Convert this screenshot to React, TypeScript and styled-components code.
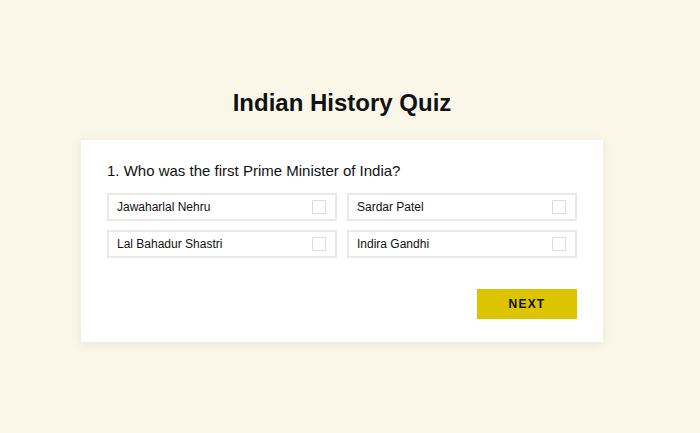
import styled, { createGlobalStyle } from "styled-components";

const GlobalStyle = createGlobalStyle`
  body {
    margin: 0;
    background: #faf7e9;
    font-family: Arial, "Liberation Sans", sans-serif;
  }
`;

const Page = styled.div`
  display: flex;
  flex-direction: column;
  align-items: center;
  padding: 88px 16px 0 0;
  height: 433px;
  box-sizing: border-box;
`;

const Title = styled.h1`
  margin: 0 0 23px;
  font-size: 24px;
  line-height: 29px;
  font-weight: 700;
  color: #111;
`;

const Card = styled.div`
  width: 522px;
  box-sizing: border-box;
  background: #fff;
  padding: 21px 26px 23px;
  box-shadow: 0 2px 10px rgba(120, 110, 60, 0.12);
`;

const Question = styled.h2`
  margin: 0 0 12px;
  font-size: 15px;
  line-height: 20px;
  font-weight: 400;
  color: #111;
`;

const Options = styled.div`
  display: grid;
  grid-template-columns: 230px 230px;
  column-gap: 10px;
  row-gap: 9px;
`;

const Option = styled.label`
  display: flex;
  align-items: center;
  justify-content: space-between;
  height: 28px;
  box-sizing: border-box;
  padding: 0 9px 0 8px;
  border: 2px solid #e8e8e8;
  font-size: 12px;
  color: #111;
  cursor: pointer;
`;

const Box = styled.span`
  width: 14px;
  height: 14px;
  box-sizing: border-box;
  border: 1px solid #ddd;
  background: #fff;
`;

const Footer = styled.div`
  display: flex;
  justify-content: flex-end;
  margin-top: 31px;
`;

const NextButton = styled.button`
  width: 100px;
  height: 30px;
  border: none;
  background: #dcc500;
  color: #111;
  font-family: Arial, "Liberation Sans", sans-serif;
  font-size: 12px;
  font-weight: 700;
  letter-spacing: 1.2px;
  cursor: pointer;
`;

const answers = ["Jawaharlal Nehru", "Sardar Patel", "Lal Bahadur Shastri", "Indira Gandhi"];

export default function App() {
  return (
    <>
      <GlobalStyle />
      <Page>
        <Title>Indian History Quiz</Title>
        <Card>
          <Question>1. Who was the first Prime Minister of India?</Question>
          <Options>
            {answers.map((a) => (
              <Option key={a}>
                {a}
                <Box />
              </Option>
            ))}
          </Options>
          <Footer>
            <NextButton>NEXT</NextButton>
          </Footer>
        </Card>
      </Page>
    </>
  );
}
